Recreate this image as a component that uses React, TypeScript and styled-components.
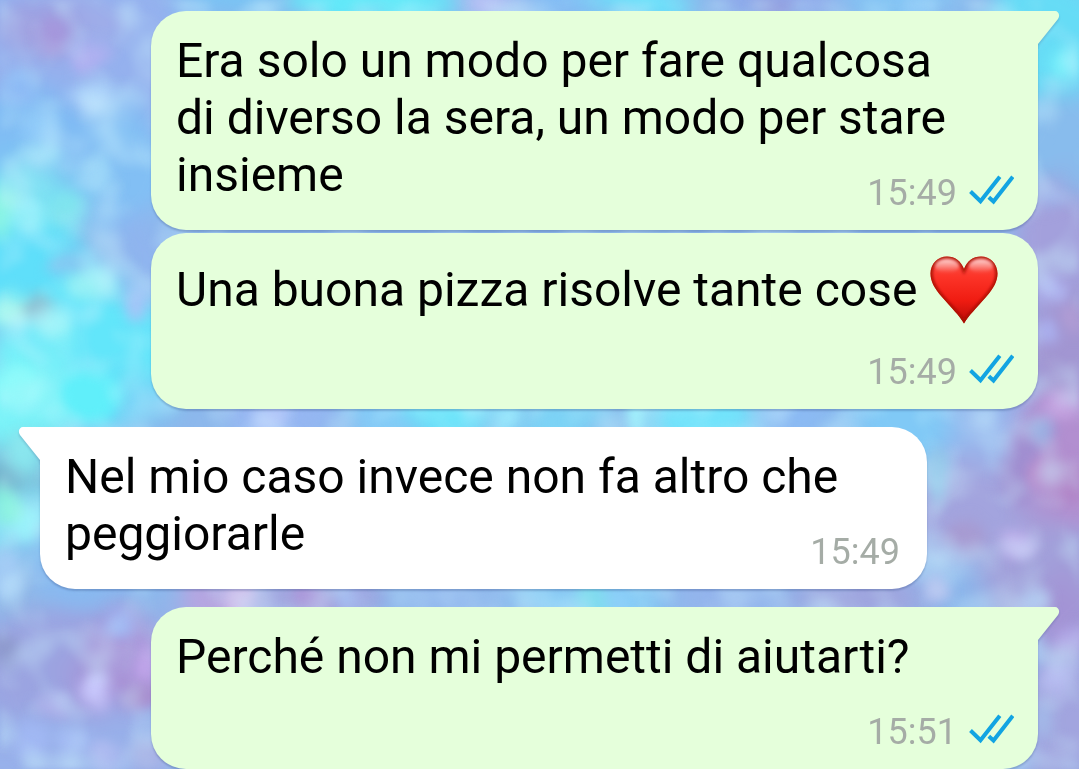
import React from 'react';
import styled, { createGlobalStyle, css } from 'styled-components';

type Side = 'sent' | 'received';

interface Message {
  id: number;
  side: Side;
  lines: string[];
  heart?: boolean;
  time: string;
  firstOfGroup: boolean;
}

const messages: Message[] = [
  {
    id: 1,
    side: 'sent',
    lines: ['Era solo un modo per fare qualcosa', 'di diverso la sera, un modo per stare', 'insieme'],
    time: '15:49',
    firstOfGroup: true,
  },
  {
    id: 2,
    side: 'sent',
    lines: ['Una buona pizza risolve tante cose '],
    heart: true,
    time: '15:49',
    firstOfGroup: false,
  },
  {
    id: 3,
    side: 'received',
    lines: ['Nel mio caso invece non fa altro che', 'peggiorarle'],
    time: '15:49',
    firstOfGroup: true,
  },
  {
    id: 4,
    side: 'sent',
    lines: ['Perché non mi permetti di aiutarti?'],
    time: '15:51',
    firstOfGroup: true,
  },
];

const bubbleColor: Record<Side, string> = {
  sent: '#e5ffdb',
  received: '#ffffff',
};

const GlobalStyle = createGlobalStyle`
  *, *::before, *::after {
    box-sizing: border-box;
  }

  body {
    margin: 0;
    background: #8db8ec;
    font-family: Roboto, "Liberation Sans", sans-serif;
  }
`;

const Chat = styled.main`
  position: relative;
  z-index: 0;
  min-height: 100vh;
`;

const WallpaperSvg = styled.svg`
  position: fixed;
  inset: 0;
  width: 100%;
  height: 100%;
  z-index: -1;
`;

const MessageList = styled.ol`
  display: flex;
  flex-direction: column;
  margin: 0;
  padding: 11px 41px 0 40px;
  list-style: none;
`;

const Bubble = styled.li<{ $side: Side; $tail: boolean }>`
  position: relative;
  display: flow-root;
  width: calc(100% - 111px);
  align-self: ${({ $side }) => ($side === 'sent' ? 'flex-end' : 'flex-start')};
  padding: 21px ${({ $side }) => ($side === 'sent' ? 24 : 27)}px 16px 25px;
  border-radius: 35px;
  background: ${({ $side }) => bubbleColor[$side]};
  box-shadow: 0 2px 2px rgba(30, 50, 110, 0.24);
  color: #000;
  font-size: 48px;
  line-height: 57px;

  ${({ $side, $tail }) =>
    $tail &&
    ($side === 'sent'
      ? css`
          border-top-right-radius: 0;
        `
      : css`
          border-top-left-radius: 0;
        `)}

  &:not(:first-child) {
    margin-top: ${({ $tail }) => ($tail ? 18 : 3)}px;
  }
`;

const TailSvg = styled.svg<{ $side: Side }>`
  position: absolute;
  top: 0;
  ${({ $side }) =>
    $side === 'sent'
      ? css`
          left: 100%;
        `
      : css`
          right: 100%;
          transform: scaleX(-1);
        `}
  overflow: visible;
  fill: ${({ $side }) => bubbleColor[$side]};
  filter: drop-shadow(0 2px 1px rgba(30, 50, 110, 0.2));
  clip-path: inset(0 -4px -4px 0);
`;

const Meta = styled.span`
  float: right;
  margin-top: 27px;
  color: #a5aca6;
  font-size: 36px;
  line-height: 41px;
`;

const TickSvg = styled.svg`
  margin-left: 12px;
  vertical-align: baseline;
  fill: none;
  stroke: #12a4e2;
  stroke-width: 4;
`;

const HeartSvg = styled.svg`
  vertical-align: -19px;
`;

function Tail({ side }: { side: Side }) {
  return (
    <TailSvg $side={side} width="21" height="34" viewBox="0 0 21 34" aria-hidden="true">
      <path d="M-1 0H17C20.500 0 22.500 4.500 20 8L0 33V36H-1Z" />
    </TailSvg>
  );
}

function ReadTicks() {
  return (
    <TickSvg width="45" height="30" viewBox="0 0 45 30" role="img" aria-label="Letto">
      <path d="M1.500 16.500L11.500 26.300L30.800 1.800" />
      <path d="M19.800 22.300L24.500 26.600L43.800 1.800" />
    </TickSvg>
  );
}

const heartOutline =
  'M35 69.500C31 62 22 53.500 13 43C5 34 1.500 27 1.500 19.500C1.500 9.500 9 2.500 18 2.500C26 2.500 32 7 35 15C38 7 44 2.500 52 2.500C61 2.500 68.500 9.500 68.500 19.500C68.500 27 65 34 57 43C48 53.500 39 62 35 69.500Z';

function Heart() {
  return (
    <HeartSvg width="70" height="71" viewBox="0 0 70 71" role="img" aria-label="cuore rosso">
      <defs>
        <linearGradient id="heartFill" x1="0" y1="0" x2="0" y2="1">
          <stop offset="0" stopColor="#f8584e" />
          <stop offset="0.3" stopColor="#fc3428" />
          <stop offset="0.65" stopColor="#f01c12" />
          <stop offset="1" stopColor="#b80a06" />
        </linearGradient>
        <linearGradient id="heartShine" x1="0" y1="0" x2="0" y2="1">
          <stop offset="0" stopColor="#fff" stopOpacity="0.75" />
          <stop offset="1" stopColor="#fff" stopOpacity="0" />
        </linearGradient>
        <filter id="heartSoft" x="-30%" y="-40%" width="160%" height="180%">
          <feGaussianBlur stdDeviation="1.5" />
        </filter>
        <clipPath id="heartClip">
          <path d={heartOutline} />
        </clipPath>
      </defs>
      <path d={heartOutline} fill="url(#heartFill)" />
      <g clipPath="url(#heartClip)">
        <path d={heartOutline} fill="none" stroke="#a60c04" strokeWidth="4" filter="url(#heartSoft)" />
        <ellipse cx="18" cy="12" rx="12" ry="7" fill="url(#heartShine)" filter="url(#heartSoft)" />
        <ellipse cx="52" cy="12" rx="12" ry="7" fill="url(#heartShine)" filter="url(#heartSoft)" />
      </g>
    </HeartSvg>
  );
}

type Blob = [x: number, y: number, rx: number, ry: number, color: string];

const softBlobs: Blob[] = [
  [80, 60, 140, 90, '#95b1ee'],
  [40, 30, 34, 30, '#a09fe0'],
  [95, 25, 24, 24, '#9fade9'],
  [40, 150, 110, 60, '#80bcf4'],
  [130, 170, 40, 70, '#82bff4'],
  [25, 205, 60, 46, '#7ae0f3'],
  [10, 270, 80, 50, '#5fdffa'],
  [145, 260, 26, 50, '#8fb4ee'],
  [85, 360, 90, 80, '#62e6fa'],
  [20, 400, 60, 60, '#7af4f9'],
  [135, 400, 26, 30, '#73d2f7'],
  [15, 475, 40, 34, '#7cc4dc'],
  [25, 530, 50, 40, '#88dff5'],
  [80, 570, 70, 36, '#88b9f0'],
  [10, 600, 34, 40, '#90b8e8'],
  [70, 670, 110, 60, '#9ba4e1'],
  [125, 665, 50, 50, '#a894d8'],
  [70, 750, 130, 40, '#98b0ea'],
  [370, 0, 90, 24, '#5fecf9'],
  [230, 0, 46, 20, '#78c4f4'],
  [490, 0, 30, 20, '#a5bcf2'],
  [560, 0, 40, 20, '#82bdf5'],
  [640, 0, 50, 20, '#68e4fb'],
  [780, 0, 60, 24, '#8fa9ea'],
  [900, 0, 60, 24, '#83c4f4'],
  [1050, 40, 70, 70, '#66dcf6'],
  [1065, 150, 60, 60, '#88bced'],
  [1060, 260, 50, 80, '#a3a0dc'],
  [1065, 350, 50, 60, '#a296d2'],
  [1065, 460, 66, 74, '#b28fd0'],
  [970, 440, 50, 40, '#98b8ee'],
  [970, 510, 60, 50, '#a3a4de'],
  [1050, 580, 70, 60, '#a2a0da'],
  [1065, 620, 30, 50, '#a394d5'],
  [1065, 720, 50, 70, '#a2a5df'],
  [280, 415, 50, 30, '#96b6f2'],
  [380, 415, 40, 30, '#84ccf7'],
  [450, 415, 50, 30, '#66e4fa'],
  [560, 415, 50, 30, '#7cd3f5'],
  [700, 415, 60, 30, '#72e4fb'],
  [800, 415, 40, 30, '#8bbaf3'],
  [900, 420, 50, 50, '#80c9f6'],
  [220, 600, 50, 24, '#b8a4e0'],
  [320, 600, 60, 24, '#a3a0dc'],
  [450, 600, 50, 24, '#8db2ec'],
  [590, 600, 80, 24, '#80c9f4'],
  [730, 600, 60, 24, '#94b4ec'],
  [860, 600, 70, 24, '#a0a4de'],
];

const sparkles: Blob[] = [
  [55, 35, 12, 16, '#a597dc'],
  [88, 55, 13, 12, '#b0b0f0'],
  [92, 98, 20, 11, '#acd2fa'],
  [20, 90, 14, 12, '#86b4f4'],
  [40, 128, 14, 12, '#8fcaf9'],
  [98, 174, 15, 16, '#9cd6f8'],
  [40, 155, 14, 10, '#94daf7'],
  [2, 212, 12, 22, '#8af4e4'],
  [66, 208, 12, 14, '#80e4ee'],
  [30, 215, 16, 14, '#8deef9'],
  [90, 284, 18, 12, '#90f0f4'],
  [68, 262, 16, 10, '#84c9f2'],
  [138, 303, 12, 16, '#a2c6f7'],
  [12, 312, 20, 14, '#a6f7ee'],
  [38, 308, 13, 10, '#8fc2d4'],
  [55, 326, 16, 10, '#9bf4f8'],
  [20, 388, 20, 18, '#8ffafa'],
  [90, 395, 26, 24, '#60effa'],
  [4, 478, 14, 12, '#70b2cb'],
  [25, 452, 14, 16, '#8ae6ee'],
  [22, 525, 14, 12, '#8af2fa'],
  [6, 506, 10, 14, '#84f3dc'],
  [6, 575, 12, 20, '#a4ccf5'],
  [3, 650, 12, 12, '#8f9bce'],
  [118, 624, 14, 10, '#9eb4f2'],
  [95, 690, 11, 13, '#c8c8fc'],
  [146, 663, 8, 14, '#c0a5ea'],
  [140, 695, 14, 12, '#a88ece'],
  [54, 705, 14, 10, '#a9aae8'],
  [30, 738, 14, 12, '#a1b8f3'],
  [72, 742, 14, 12, '#a4bcf4'],
  [105, 757, 12, 12, '#aebbf0'],
  [150, 755, 18, 12, '#a0a4e0'],
  [488, 4, 12, 12, '#b6c0f4'],
  [775, 5, 16, 8, '#94a0e0'],
  [920, 5, 14, 8, '#94cdf8'],
  [1062, 63, 14, 14, '#76eefa'],
  [1050, 195, 12, 12, '#9eafe7'],
  [1052, 290, 12, 12, '#b0b6f0'],
  [1074, 318, 8, 12, '#b09cd4'],
  [1044, 335, 8, 12, '#aab0ee'],
  [1060, 405, 16, 8, '#c6a6e2'],
  [1040, 430, 8, 14, '#93a8df'],
  [1065, 480, 16, 20, '#b286c8'],
  [1020, 470, 16, 30, '#a08ed0'],
  [1040, 475, 12, 16, '#b890cf'],
  [1016, 542, 13, 12, '#c2b4ee'],
  [965, 535, 16, 14, '#a79bd2'],
  [938, 475, 8, 24, '#86bfe4'],
  [935, 588, 8, 12, '#b2b4ea'],
  [1032, 602, 12, 10, '#aec4ee'],
  [1070, 640, 12, 10, '#b2a8e6'],
  [1060, 680, 11, 15, '#b4b6ee'],
  [1045, 720, 6, 12, '#a3bbe9'],
  [505, 418, 10, 16, '#92e4fb'],
  [638, 418, 10, 16, '#9ceefb'],
  [270, 418, 14, 12, '#aebdf8'],
  [238, 598, 10, 14, '#d2bcea'],
  [310, 598, 14, 12, '#ac98da'],
  [350, 600, 10, 12, '#a5bdf0'],
  [596, 598, 14, 14, '#80dcee'],
  [620, 600, 12, 14, '#8ccff8'],
];

function Wallpaper() {
  return (
    <WallpaperSvg viewBox="0 0 1079 769" preserveAspectRatio="none" aria-hidden="true">
      <defs>
        <filter id="softBlur" x="-10%" y="-10%" width="120%" height="120%" colorInterpolationFilters="sRGB">
          <feGaussianBlur stdDeviation="12" result="soft" />
          <feTurbulence type="fractalNoise" baseFrequency="0.02" numOctaves="1" seed="4" result="noise" />
          <feDisplacementMap in="soft" in2="noise" scale="40" xChannelSelector="R" yChannelSelector="G" />
          <feGaussianBlur stdDeviation="4" />
        </filter>
        <filter id="sparkleBlur" x="-10%" y="-10%" width="120%" height="120%" colorInterpolationFilters="sRGB">
          <feGaussianBlur stdDeviation="6" result="soft" />
          <feTurbulence type="fractalNoise" baseFrequency="0.03" numOctaves="1" seed="9" result="noise" />
          <feDisplacementMap in="soft" in2="noise" scale="20" xChannelSelector="R" yChannelSelector="G" />
          <feGaussianBlur stdDeviation="3" />
        </filter>
        <filter id="glitter" x="0" y="0" width="100%" height="100%" colorInterpolationFilters="sRGB">
          <feTurbulence type="fractalNoise" baseFrequency="0.024" numOctaves="2" seed="21" />
          <feColorMatrix values="0 0 0 0 0.8  0 0 0 0 0.95  0 0 0 0 1  1.200 0 0 0 -0.500" />
          <feGaussianBlur stdDeviation="3" />
        </filter>
      </defs>
      <rect width="1079" height="769" fill="#8db8ec" />
      <g filter="url(#softBlur)">
        {softBlobs.map(([x, y, rx, ry, color]) => (
          <ellipse key={`${x}-${y}`} cx={x} cy={y} rx={rx} ry={ry} fill={color} />
        ))}
      </g>
      <g filter="url(#sparkleBlur)">
        {sparkles.map(([x, y, rx, ry, color]) => (
          <ellipse key={`${x}-${y}`} cx={x} cy={y} rx={rx + 3} ry={ry + 3} fill={color} />
        ))}
      </g>
      <rect width="1079" height="769" filter="url(#glitter)" />
    </WallpaperSvg>
  );
}

function MessageBubble({ message }: { message: Message }) {
  const { side, lines, heart, time, firstOfGroup } = message;
  return (
    <Bubble $side={side} $tail={firstOfGroup}>
      {firstOfGroup && <Tail side={side} />}
      {lines.map((line, i) => (
        <React.Fragment key={line}>
          {i > 0 && <br />}
          {line}
        </React.Fragment>
      ))}
      {heart && <Heart />}
      <Meta>
        <time>{time}</time>
        {side === 'sent' && <ReadTicks />}
      </Meta>
    </Bubble>
  );
}

export default function App() {
  return (
    <Chat>
      <GlobalStyle />
      <Wallpaper />
      <MessageList>
        {messages.map((message) => (
          <MessageBubble key={message.id} message={message} />
        ))}
      </MessageList>
    </Chat>
  );
}
